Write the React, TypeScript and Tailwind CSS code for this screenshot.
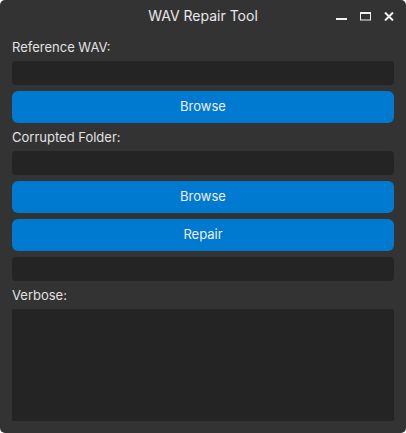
const font = { fontFamily: 'Inter, "Noto Sans", sans-serif' };

function Field() {
    return <div className="h-[24px] rounded-[4px] bg-[#242424]" />;
}

function Button({ label }: { label: string }) {
    return (
        <button className="h-[32px] w-full rounded-[6px] bg-[#0079d0] text-[13px] text-[#f0f0f0]">
            {label}
        </button>
    );
}

function Label({ text }: { text: string }) {
    return <div className="h-4 text-[13px] leading-4 text-[#e2e2e2]">{text}</div>;
}

export default function App() {
    return (
        <div className="h-[433px] w-[406px] bg-white" style={font}>
            <div className="flex h-full flex-col overflow-hidden rounded-[5px] bg-[#333333]">
                {/* Title bar */}
                <div className="relative flex h-[33px] shrink-0 items-center justify-center">
                    <span className="pb-[3px] text-[14px] text-[#e8e8e8]">WAV Repair Tool</span>
                    <div className="absolute right-[12px] top-[12px] flex items-start gap-[13px]">
                        <svg width="11" height="9" viewBox="0 0 11 9">
                            <rect x="0" y="6" width="11" height="2" fill="#f0f0f0" />
                        </svg>
                        <svg width="11" height="9" viewBox="0 0 11 9">
                            <rect x="0.5" y="0.5" width="10" height="7.5" fill="none" stroke="#f0f0f0" strokeWidth="1" />
                            <rect x="0" y="0" width="11" height="2" fill="#f0f0f0" />
                        </svg>
                        <svg width="10" height="9" viewBox="0 0 10 9">
                            <path d="M1 0.5 L9 8.5 M9 0.5 L1 8.5" stroke="#f0f0f0" strokeWidth="2" />
                        </svg>
                    </div>
                </div>

                {/* Form */}
                <div className="flex flex-1 flex-col gap-[6px] px-[12px] pb-[12px] pt-[6px]">
                    <Label text="Reference WAV:" />
                    <Field />
                    <Button label="Browse" />
                    <Label text="Corrupted Folder:" />
                    <Field />
                    <Button label="Browse" />
                    <Button label="Repair" />
                    <Field />
                    <Label text="Verbose:" />
                    <div className="flex-1 rounded-[2px] bg-[#242424]" />
                </div>
            </div>
        </div>
    );
}
